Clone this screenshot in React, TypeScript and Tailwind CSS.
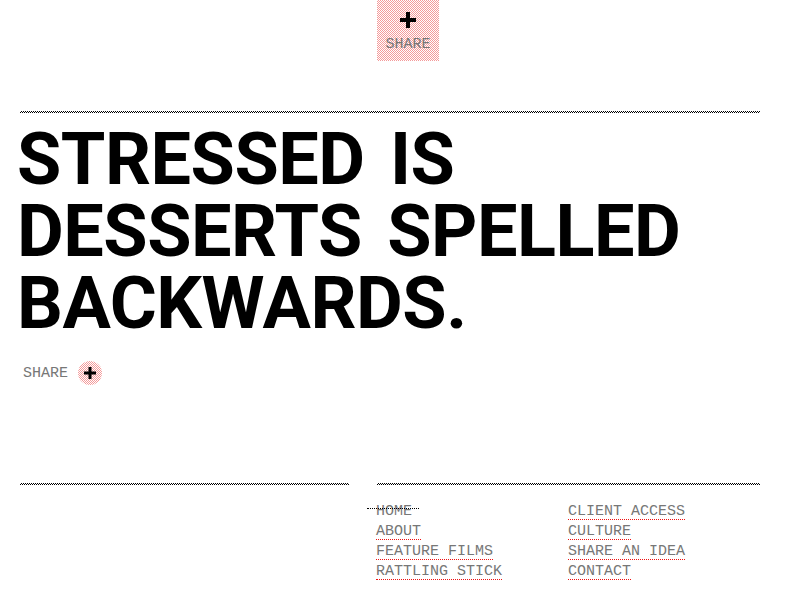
import React from "react";

const rule =
  "h-[2px] bg-[image:repeating-conic-gradient(#000_0_25%,#fff_0_50%)] bg-[length:2px_2px]";
const pink =
  "bg-[image:repeating-conic-gradient(#f49a9a_0_25%,#fff_0_50%)] bg-[length:2px_2px]";

const Plus = ({ size = 16 }: { size?: number }) => (
  <svg width={size} height={size} viewBox="0 0 16 16">
    <rect x="6" y="0" width="4" height="16" fill="#000" />
    <rect x="0" y="6" width="16" height="4" fill="#000" />
  </svg>
);

const mono = "font-['Liberation_Mono','Courier_New',monospace] text-[15px] text-[#777]";

const NavLink = ({ label, current }: { label: string; current?: boolean }) => (
  <li className="relative h-5">
    {current ? (
      <>
        <span className="leading-[15px] inline-block">{label}</span>
        <span className="absolute left-[-9px] top-[7px] w-[52px] border-t border-dotted border-black" />
      </>
    ) : (
      <a href="#" className="inline-block leading-[15px] border-b border-dotted border-[#e11]">
        {label}
      </a>
    )}
  </li>
);

export default function App() {
  return (
    <div className="w-[797px] h-[600px] bg-white px-5 overflow-hidden">
      <div className="w-[740px]">
        {/* top share */}
        <div className="pl-[357px]">
          <a href="#" className={`w-[62px] h-[61px] flex flex-col items-center pt-[12px] ${pink}`}>
            <Plus size={16} />
            <span className={`${mono} mt-[9px] leading-[15px]`}>SHARE</span>
          </a>
        </div>

        <div className={`${rule} mt-[50px]`} />

        <h1 className="mt-[11px] ml-[-3px] font-['Roboto',sans-serif] font-bold text-[72px] leading-[72px] tracking-[-0.5px] [word-spacing:8px] text-black">
          STRESSED IS
          <br />
          DESSERTS SPELLED
          <br />
          BACKWARDS.
        </h1>

        <div className="mt-[21px] flex items-center gap-[10px] pl-[3px] h-6">
          <span className={`${mono} leading-[15px]`}>SHARE</span>
          <span className={`w-6 h-6 rounded-full flex items-center justify-center ${pink}`}>
            <Plus size={12} />
          </span>
        </div>

        {/* footer */}
        <div className="mt-[98px] flex gap-[28px]">
          <div className="w-[329px]">
            <div className={rule} />
          </div>
          <div className="flex-1">
            <div className={rule} />
            <div className={`flex mt-[16px] ${mono}`}>
              <ul className="w-[192px] ml-[-1px]">
                <NavLink label="HOME" current />
                <NavLink label="ABOUT" />
                <NavLink label="FEATURE FILMS" />
                <NavLink label="RATTLING STICK" />
              </ul>
              <ul>
                <NavLink label="CLIENT ACCESS" />
                <NavLink label="CULTURE" />
                <NavLink label="SHARE AN IDEA" />
                <NavLink label="CONTACT" />
              </ul>
            </div>
          </div>
        </div>
      </div>
    </div>
  );
}
